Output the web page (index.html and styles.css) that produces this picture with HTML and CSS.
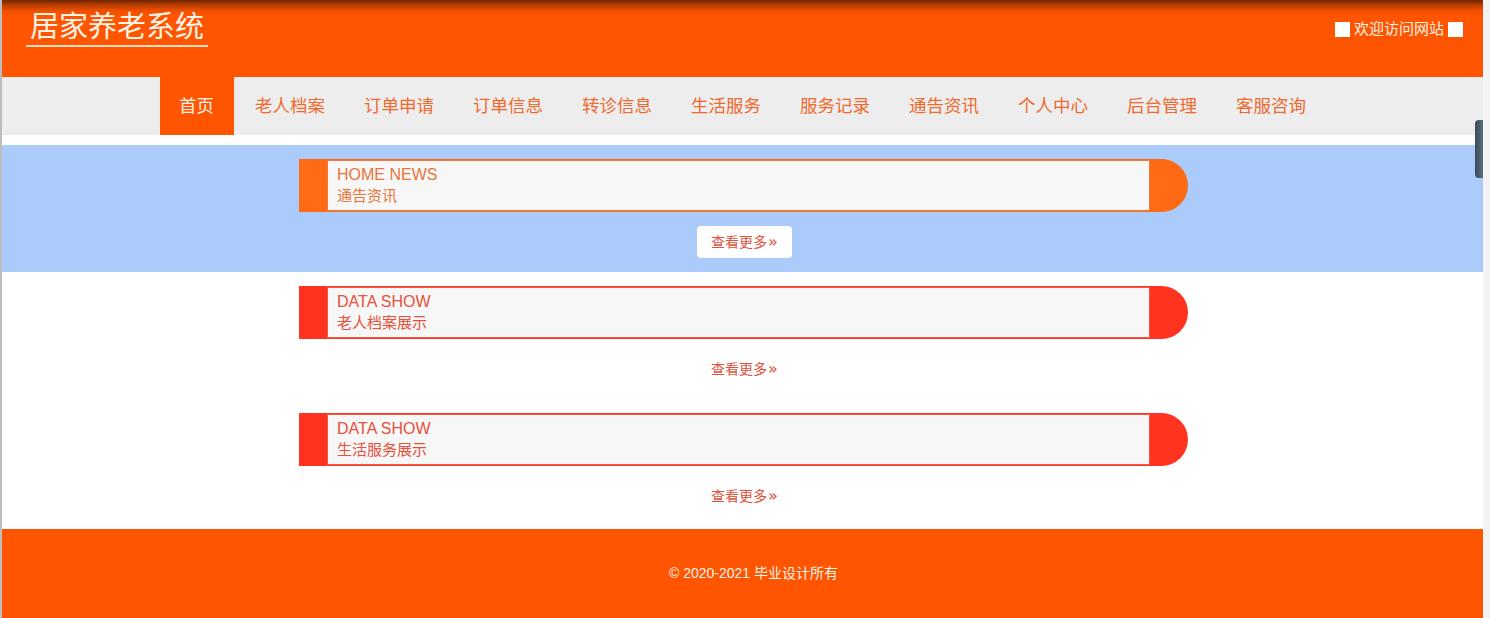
FILE: index.html
```html
<!DOCTYPE html>
<html lang="zh">
<head>
<meta charset="utf-8">
<title>居家养老系统</title>
<link rel="stylesheet" href="styles.css">
</head>
<body>
<div class="frame">
  <div class="page">
    <header class="header">
      <div class="brand">居家养老系统</div>
      <div class="welcome"><span class="sq"></span>欢迎访问网站<span class="sq"></span></div>
    </header>
    <nav class="nav">
      <ul class="menu">
        <li class="item active">首页</li>
        <li class="item">老人档案</li>
        <li class="item">订单申请</li>
        <li class="item">订单信息</li>
        <li class="item">转诊信息</li>
        <li class="item">生活服务</li>
        <li class="item">服务记录</li>
        <li class="item">通告资讯</li>
        <li class="item">个人中心</li>
        <li class="item">后台管理</li>
        <li class="item">客服咨询</li>
      </ul>
    </nav>
    <main class="main">
      <section class="block news">
        <div class="bar">
          <div class="bar-inner">
            <div class="bar-en">HOME NEWS</div>
            <div class="bar-cn">通告资讯</div>
          </div>
        </div>
        <div class="more-row"><span class="more boxed">查看更多<span class="arr">»</span></span></div>
      </section>
      <section class="block data">
        <div class="bar">
          <div class="bar-inner">
            <div class="bar-en">DATA SHOW</div>
            <div class="bar-cn">老人档案展示</div>
          </div>
        </div>
        <div class="more-row"><span class="more">查看更多<span class="arr">»</span></span></div>
      </section>
      <section class="block data">
        <div class="bar">
          <div class="bar-inner">
            <div class="bar-en">DATA SHOW</div>
            <div class="bar-cn">生活服务展示</div>
          </div>
        </div>
        <div class="more-row"><span class="more">查看更多<span class="arr">»</span></span></div>
      </section>
    </main>
    <footer class="footer">© 2020-2021 毕业设计所有</footer>
  </div>
  <div class="side">
    <div class="widget"></div>
  </div>
</div>
</body>
</html>
```

FILE: styles.css
```css
* { box-sizing: border-box; }
html, body { margin: 0; padding: 0; }
body {
  font-family: "Liberation Sans", "Noto Sans CJK SC", sans-serif;
  background: #f2f2f2;
  overflow: hidden;
}
.frame {
  display: flex;
  height: 618px;
}
.page {
  width: 1483px;
  border-left: 2px solid #bdbdbd;
  background: #ffffff;
  display: flex;
  flex-direction: column;
}
.side {
  flex: 1;
  background: #f3f3f3;
  position: relative;
}
.widget {
  position: absolute;
  left: -8px;
  top: 120px;
  width: 8px;
  height: 58px;
  border-radius: 4px 0 0 4px;
  background: linear-gradient(90deg, #3a4a5c, #566f7a);
}
.header {
  height: 77px;
  background: linear-gradient(180deg, #6e2600 0px, #b83d00 5px, #f05000 11px, #ff5500 16px, #ff5500 100%);
  display: flex;
  justify-content: space-between;
  align-items: flex-start;
  padding: 0 16px 0 24px;
}
.brand {
  margin-top: 10px;
  color: #fff3e6;
  font-size: 29px;
  line-height: 34px;
  padding: 0 4px 1px 4px;
  border-bottom: 2px solid #f6dcc4;
}
.welcome {
  margin-top: 20px;
  color: #fff1e4;
  font-size: 15px;
  line-height: 18px;
  display: flex;
  align-items: center;
}
.sq {
  display: inline-block;
  width: 15px;
  height: 15px;
  background: #ffffff;
  margin: 0 4px;
}
.nav {
  height: 58px;
  background: #ededed;
  display: flex;
  justify-content: center;
}
.menu {
  list-style: none;
  margin: 0;
  padding: 0;
  display: flex;
}
.item {
  height: 58px;
  line-height: 58px;
  padding: 0 19.5px;
  font-size: 17.5px;
  color: #ef6a2e;
}
.active {
  background: #ff5500;
  color: #fff2e8;
  margin-right: 2px;
}
.main {
  margin-top: 10px;
  display: flex;
  flex-direction: column;
}
.block {
  padding: 14px 0 14px;
  display: flex;
  flex-direction: column;
  align-items: center;
}
.news { background: #abcbfa; }
.bar {
  width: 889px;
  height: 53px;
  margin-left: 2px;
  padding: 1px 38px 1px 28px;
  border-radius: 0 27px 27px 0;
}
.bar-inner {
  height: 51px;
  background: #f7f7f7;
  padding: 4px 9px 0;
}
.news .bar { background: #ff6a14; }
.news .bar-inner { border: 1px solid #f07a40; }
.data .bar { background: #ff3320; }
.data .bar-inner { border: 1px solid #f05a44; }
.bar-en {
  font-size: 16px;
  line-height: 20px;
}
.bar-cn {
  font-size: 15px;
  line-height: 22px;
}
.news .bar-en, .news .bar-cn { color: #e8743a; }
.data .bar-en, .data .bar-cn { color: #e8503a; }
.more-row {
  margin-top: 14px;
  height: 32px;
  display: flex;
  justify-content: center;
  margin-left: 4px;
}
.more {
  display: inline-block;
  height: 32px;
  line-height: 32px;
  padding: 0 14px;
  font-size: 14px;
  color: #e0503c;
  border-radius: 4px;
}
.arr {
  font-family: "DejaVu Sans", sans-serif;
  font-size: 16px;
  margin-left: 1px;
}
.boxed { background: #ffffff; }
.footer {
  margin-top: 3px;
  flex: 1;
  background: #ff5500;
  color: #fff3e8;
  font-size: 14px;
  text-align: center;
  padding: 33px 0 0 22px;
}
```
